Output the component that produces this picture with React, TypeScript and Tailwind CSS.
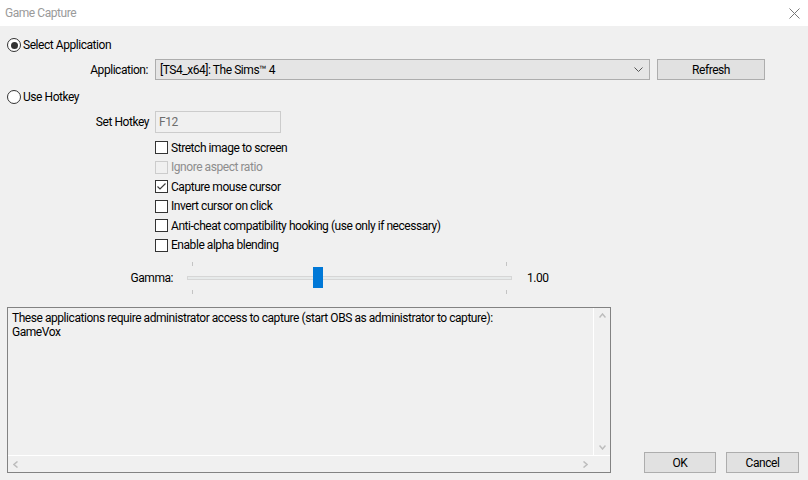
import { ReactNode } from "react";

const font = { fontFamily: 'Roboto, "Noto Sans", sans-serif' };

function Radio({ checked, label }: { checked: boolean; label: string }) {
  return (
    <div className="flex h-[14px] items-center pl-[7px]">
      <span className="flex h-[14px] w-[14px] items-center justify-center rounded-full border border-[#333] bg-white">
        {checked && <span className="h-[7px] w-[7px] rounded-full bg-[#333]" />}
      </span>
      <span className="ml-[2px] text-[12px] leading-none text-black">{label}</span>
    </div>
  );
}

function Check({
  label,
  checked = false,
  disabled = false,
}: {
  label: string;
  checked?: boolean;
  disabled?: boolean;
}) {
  return (
    <div className="flex h-[19.5px] items-center">
      <span
        className={
          disabled
            ? "flex h-[13px] w-[13px] items-center justify-center border border-[#cccccc] bg-[#f0f0f0]"
            : "flex h-[13px] w-[13px] items-center justify-center border border-[#333] bg-white"
        }
      >
        {checked && (
          <svg width="11" height="11" viewBox="0 0 11 11">
            <polyline
              points="1.5,5.5 4,8 9.5,2.5"
              fill="none"
              stroke="#3a3a3a"
              strokeWidth="1.2"
            />
          </svg>
        )}
      </span>
      <span
        className={
          disabled
            ? "ml-[3px] text-[12px] leading-none text-[#8d8d8d]"
            : "ml-[3px] text-[12px] leading-none text-black"
        }
      >
        {label}
      </span>
    </div>
  );
}

function Button({ children, className }: { children: ReactNode; className: string }) {
  return (
    <div
      className={
        "flex h-[21px] items-center justify-center border border-[#adadad] bg-[#e1e1e1] text-[12px] text-black " +
        className
      }
    >
      {children}
    </div>
  );
}

function Tick() {
  return <span className="h-[4px] w-px bg-[#c4c4c4]" />;
}

export default function App() {
  return (
    <div
      className="h-[480px] w-[808px] overflow-hidden bg-[#f0f0f0] tracking-[-0.45px]"
      style={font}
    >
      {/* title bar */}
      <div className="flex h-[26px] items-center justify-between bg-white pl-[5px] pr-[8px]">
        <span className="text-[12px] text-[#9a9a9a]">Game Capture</span>
        <svg width="11" height="11" viewBox="0 0 11 11">
          <path d="M0.5 0.5 L10.5 10.5 M10.5 0.5 L0.5 10.5" stroke="#777" strokeWidth="1" />
        </svg>
      </div>

      <div className="flex flex-col">
        <div className="mt-[12px]">
          <Radio checked label="Select Application" />
        </div>

        <div className="mt-[7px] flex items-center">
          <span className="w-[149px] pr-[1px] text-right text-[12px] text-black">Application:</span>
          <div className="ml-[6px] flex h-[21px] w-[495px] items-center justify-between border border-[#adadad] bg-[#e5e5e5] pl-[4px] pr-[6px]">
            <span className="text-[12px] text-black">[TS4_x64]: The Sims™ 4</span>
            <svg width="9" height="5" viewBox="0 0 9 5">
              <polyline points="0.5,0.5 4.5,4.5 8.5,0.5" fill="none" stroke="#555" strokeWidth="1" />
            </svg>
          </div>
          <Button className="ml-[7px] w-[108px]">Refresh</Button>
        </div>

        <div className="mt-[10px]">
          <Radio checked={false} label="Use Hotkey" />
        </div>

        <div className="mt-[7px] flex items-center">
          <span className="w-[149px] text-right text-[12px] text-black">Set Hotkey</span>
          <div className="ml-[6px] flex h-[22px] w-[126px] items-center border border-[#cccccc] bg-[#f0f0f0] pl-[3px]">
            <span className="text-[12px] text-[#6d6d6d]">F12</span>
          </div>
        </div>

        <div className="ml-[155px] mt-[5px] flex flex-col">
          <Check label="Stretch image to screen" />
          <Check label="Ignore aspect ratio" disabled />
          <Check label="Capture mouse cursor" checked />
          <Check label="Invert cursor on click" />
          <Check label="Anti-cheat compatibility hooking (use only if necessary)" />
          <Check label="Enable alpha blending" />
        </div>

        {/* gamma slider */}
        <div className="mt-[7px] flex h-[32px] items-center">
          <span className="w-[173px] text-right text-[12px] text-black">Gamma:</span>
          <div className="relative ml-[14px] h-[32px] w-[325px]">
            <div className="flex h-[4px] justify-between px-[5px]">
              <Tick />
              <span className="ml-[121px]">
                <Tick />
              </span>
              <span className="flex-1" />
              <Tick />
            </div>
            <div className="mt-[10px] h-[4px] border border-[#d6d6d6] bg-[#e7eaea]" />
            <div className="mt-[10px] flex h-[4px] px-[5px]">
              <Tick />
              <span className="ml-[125px]">
                <Tick />
              </span>
              <span className="flex-1" />
              <Tick />
            </div>
            <div className="absolute left-[126px] top-[5px] h-[21px] w-[10px] bg-[#0078d7]" />
          </div>
          <span className="ml-[15px] text-[12px] text-black">1.00</span>
        </div>

        {/* bottom area */}
        <div className="mt-[13px] flex items-end">
          <div className="ml-[7px] flex h-[166px] w-[604px] flex-col border border-[#828282] bg-[#f0f0f0]">
            <div className="flex flex-1">
              <div className="flex-1 px-[4px] pt-[3px] text-[12px] leading-[14px] text-black">
                <div>
                  These applications require administrator access to capture (start OBS as
                  administrator to capture):
                </div>
                <div>GameVox</div>
              </div>
              <div className="flex w-[17px] flex-col items-center justify-between border-l border-white py-[5px]">
                <svg width="7" height="5" viewBox="0 0 7 5">
                  <polyline points="0.5,4.5 3.5,1 6.5,4.5" fill="none" stroke="#bdbdbd" strokeWidth="1.5" />
                </svg>
                <svg width="7" height="5" viewBox="0 0 7 5">
                  <polyline points="0.5,0.5 3.5,4 6.5,0.5" fill="none" stroke="#bdbdbd" strokeWidth="1.5" />
                </svg>
              </div>
            </div>
            <div className="flex h-[17px] border-t border-white">
              <div className="flex flex-1 items-center justify-between px-[5px]">
                <svg width="5" height="7" viewBox="0 0 5 7">
                  <polyline points="4.5,0.5 1,3.5 4.5,6.5" fill="none" stroke="#bdbdbd" strokeWidth="1.5" />
                </svg>
                <svg width="5" height="7" viewBox="0 0 5 7">
                  <polyline points="0.5,0.5 4,3.5 0.5,6.5" fill="none" stroke="#bdbdbd" strokeWidth="1.5" />
                </svg>
              </div>
              <div className="w-[17px]" />
            </div>
          </div>
          <div className="ml-auto mr-[9px] flex gap-[10px]">
            <Button className="w-[72px]">OK</Button>
            <Button className="w-[73px]">Cancel</Button>
          </div>
        </div>
      </div>
    </div>
  );
}
